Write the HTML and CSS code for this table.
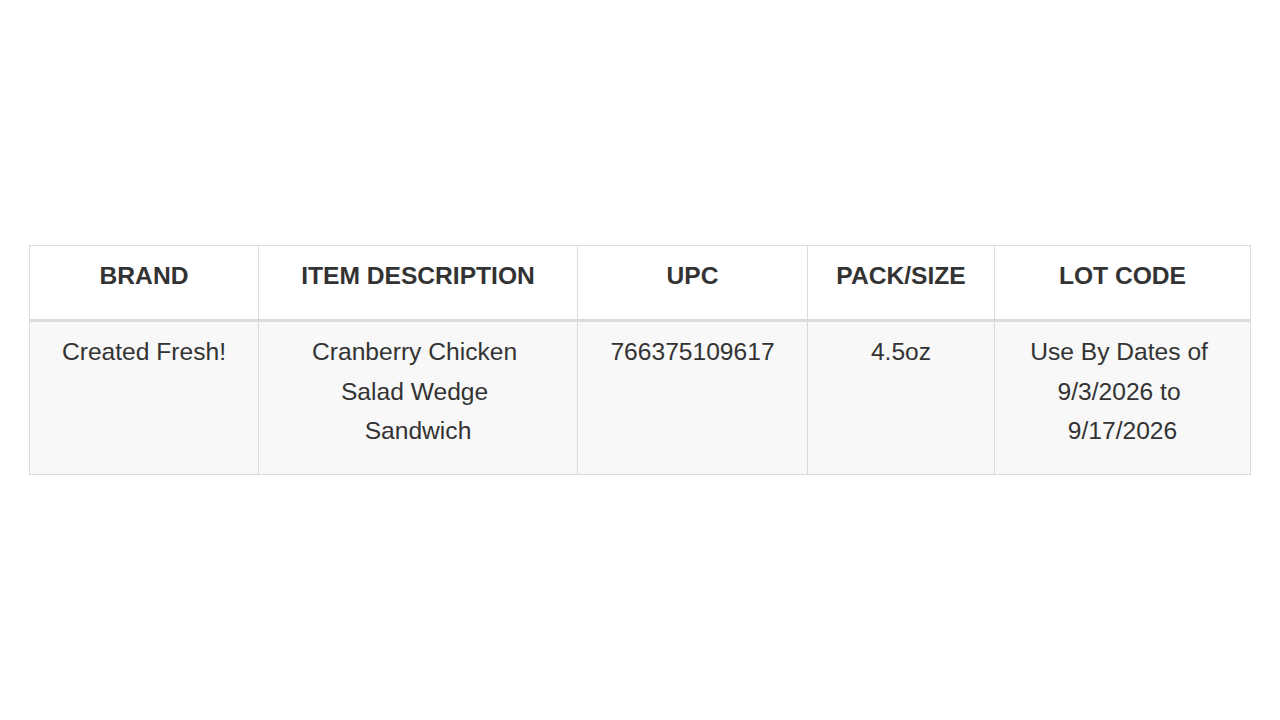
FILE: index.html
```html
<!DOCTYPE html>
<html lang="en">
<head>
  <meta charset="UTF-8">
  <title>Recall</title>
  <link rel="stylesheet" href="styles.css">
</head>
<body>

<div class="wrap">
  <table class="recall">
    <colgroup>
      <col class="c-brand">
      <col class="c-desc">
      <col class="c-upc">
      <col class="c-pack">
      <col class="c-lot">
    </colgroup>
    <thead>
      <tr>
        <th>BRAND</th>
        <th>ITEM DESCRIPTION</th>
        <th>UPC</th>
        <th>PACK/SIZE</th>
        <th>LOT CODE</th>
      </tr>
    </thead>
    <tbody>
      <tr>
        <td>Created Fresh!</td>
        <td>Cranberry Chicken&nbsp;<br>Salad Wedge&nbsp;<br>Sandwich</td>
        <td>766375109617</td>
        <td>4.5oz</td>
        <td>Use By Dates of&nbsp;<br>9/3/2026 to&nbsp;<br>9/17/2026</td>
      </tr>
    </tbody>
  </table>
</div>

</body>
</html>
```

FILE: styles.css
```css
* {
  margin: 0;
  padding: 0;
  box-sizing: border-box;
}

body {
  background-color: #fff;
  font-family: "Liberation Sans", Arial, sans-serif;
  color: #333;
}

.wrap {
  min-height: 100vh;
  display: flex;
  align-items: center;
  padding: 0 30px 0 29px;
}

.recall {
  width: 100%;
  border-collapse: collapse;
  table-layout: fixed;
  font-size: 24.6px;
  line-height: 39.5px;
}

.c-brand { width: 229px; }
.c-desc { width: 319px; }
.c-upc { width: 230px; }
.c-pack { width: 187px; }
.c-lot { width: 256px; }

.recall th,
.recall td {
  border: 1px solid #dcdcdc;
  text-align: center;
  vertical-align: top;
  padding: 10px 10px 23.5px;
}

.recall th {
  background-color: #fff;
  font-weight: bold;
  border-bottom: 3px solid #dcdcdc;
}

.recall td {
  background-color: #f8f8f8;
}
```
